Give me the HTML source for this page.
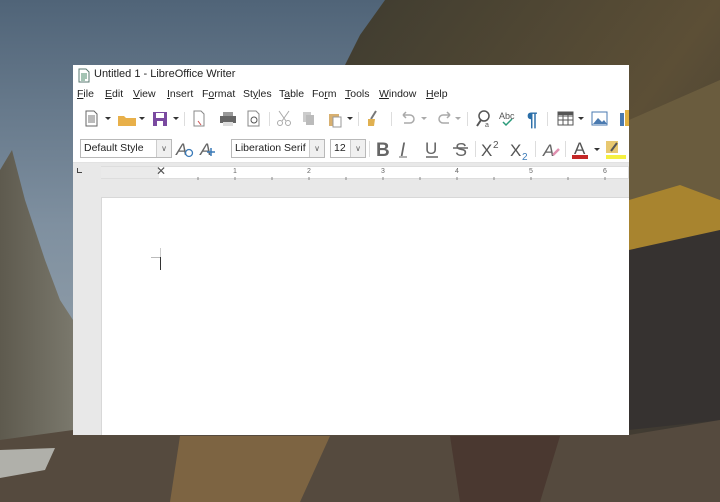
<!DOCTYPE html>
<html><head><meta charset="utf-8"><style>
*{margin:0;padding:0;box-sizing:border-box}
body{width:720px;height:502px;overflow:hidden;position:relative;font-family:"Liberation Sans",sans-serif;background:#6a7c8c}
#bg{position:absolute;left:0;top:0}
.win{position:absolute;left:73px;top:65px;width:556px;height:370px;background:#fff;overflow:hidden}
.t{position:absolute;font-size:11px;color:#222;white-space:nowrap}
.ic{position:absolute}
.box{position:absolute;border:1px solid #b9b9b9;background:#fff;height:19px;font-size:10.5px;line-height:17px;padding-left:3px;color:#222}
.dd{position:absolute;right:0;top:0;width:15px;height:17px;border-left:1px solid #ccc;background:#f0f0f0;font-size:8px;text-align:center;color:#666}
</style></head><body>
<svg id="bg" width="720" height="502">
<defs>
<linearGradient id="sky" x1="0" y1="0" x2="0" y2="1"><stop offset="0" stop-color="#506478"/><stop offset=".45" stop-color="#7f90a0"/><stop offset="1" stop-color="#a0aab0"/></linearGradient>
<linearGradient id="rr" x1="0" y1="0" x2="1" y2="1"><stop offset="0" stop-color="#3f3c30"/><stop offset=".5" stop-color="#5c4f36"/><stop offset="1" stop-color="#333130"/></linearGradient>
<linearGradient id="lc" x1="0" y1="0" x2="1" y2="0"><stop offset="0" stop-color="#5e5a4e"/><stop offset="1" stop-color="#7a786c"/></linearGradient>
</defs>
<rect width="720" height="502" fill="url(#sky)"/>
<polygon points="345,65 360,35 385,0 720,0 720,502 600,502 629,300 629,65" fill="url(#rr)"/>
<polygon points="629,120 720,80 720,230 660,240 629,230" fill="#6a5c3e"/>
<polygon points="629,200 680,185 720,200 720,240 680,260 629,250" fill="#a8842f"/>
<polygon points="629,250 720,230 720,420 629,430" fill="#363230"/>
<polygon points="0,170 12,150 25,200 45,260 60,300 73,320 73,440 0,450" fill="url(#lc)"/>
<polygon points="0,440 73,430 200,435 629,435 720,420 720,502 0,502" fill="#554a3e"/>
<polygon points="0,450 55,448 45,470 0,478" fill="#b0b0aa"/>
<polygon points="180,436 330,436 300,502 170,502" fill="#7d6442"/>
<polygon points="450,436 560,436 540,502 460,502" fill="#4a3830"/>
</svg>
<div class="win">
<svg class="ic" style="left:5px;top:3px" width="12" height="15"><path d="M1 1h7l3 3v10H1z" fill="#fff" stroke="#5a7a70"/><path d="M3 6h6M3 8h6M3 10h6M3 12h4" stroke="#4a8a6a"/></svg>
<div class="t" style="left:21px;top:3px;font-size:11px">Untitled 1 - LibreOffice Writer</div>
<div class="t" style="left:4px;top:23px;font-size:10.5px">
<span style="position:absolute;left:0"><u>F</u>ile</span><span style="position:absolute;left:28px"><u>E</u>dit</span><span style="position:absolute;left:56px"><u>V</u>iew</span><span style="position:absolute;left:90px"><u>I</u>nsert</span><span style="position:absolute;left:125px">F<u>o</u>rmat</span><span style="position:absolute;left:166px">St<u>y</u>les</span><span style="position:absolute;left:202px">T<u>a</u>ble</span><span style="position:absolute;left:235px">Fo<u>r</u>m</span><span style="position:absolute;left:268px"><u>T</u>ools</span><span style="position:absolute;left:302px"><u>W</u>indow</span><span style="position:absolute;left:349px"><u>H</u>elp</span></div>
<svg class="ic" style="left:0;top:42px" width="556" height="24" font-family="Liberation Sans">
<path d="M13 4h8l3 3v12H13z" fill="#fff" stroke="#666"/><path d="M15 9h7M15 11h7M15 13h7M15 15h7" stroke="#777"/>
<path d="M32 10l3 3 3-3z" fill="#333"/>
<path d="M45 9h6l2 2h10v8H45z" fill="#e8b04a"/>
<path d="M66 10l3 3 3-3z" fill="#333"/>
<rect x="80" y="5" width="14" height="14" fill="#7a4aa0"/><rect x="83" y="6" width="8" height="5" fill="#fff"/><rect x="84" y="14" width="6" height="5" fill="#fff"/>
<path d="M100 10l3 3 3-3z" fill="#333"/>
<rect x="111" y="5" width="1" height="14" fill="#ddd"/>
<path d="M121 4h7l3 3v12h-10z" fill="#fff" stroke="#888"/><path d="M125 14l3 4" stroke="#d05050"/>
<rect x="147" y="9" width="16" height="7" fill="#666"/><rect x="150" y="5" width="10" height="4" fill="#999"/><rect x="150" y="15" width="10" height="4" fill="#ddd"/>
<path d="M175 4h8l3 3v12h-11z" fill="#fff" stroke="#888"/><circle cx="181" cy="13" r="3" fill="none" stroke="#555"/>
<rect x="196" y="5" width="1" height="14" fill="#ddd"/>
<path d="M206 4l7 10M216 4l-7 10" stroke="#aaa"/><circle cx="207" cy="16" r="2.5" fill="none" stroke="#aaa"/><circle cx="215" cy="16" r="2.5" fill="none" stroke="#aaa"/>
<rect x="230" y="5" width="8" height="10" fill="#ccc"/><rect x="233" y="8" width="8" height="10" fill="#bbb"/>
<rect x="256" y="7" width="10" height="12" fill="#d8b070"/><rect x="260" y="10" width="8" height="10" fill="#fff" stroke="#999"/>
<path d="M274 10l3 3 3-3z" fill="#333"/>
<rect x="285" y="5" width="1" height="14" fill="#ddd"/>
<path d="M303 4l-5 8" stroke="#777" stroke-width="2"/><path d="M295 12h7l-1 7h-6z" fill="#e0b050"/>
<rect x="318" y="5" width="1" height="14" fill="#ddd"/>
<path d="M330 8h7a4 4 0 0 1 0 8h-6M330 8l3-3M330 8l3 3" fill="none" stroke="#aaa" stroke-width="1.5"/>
<path d="M348 10l3 3 3-3z" fill="#aaa"/>
<path d="M377 8h-7a4 4 0 0 0 0 8h6M377 8l-3-3M377 8l-3 3" fill="none" stroke="#aaa" stroke-width="1.5"/>
<path d="M382 10l3 3 3-3z" fill="#aaa"/>
<rect x="394" y="5" width="1" height="14" fill="#ddd"/>
<circle cx="411" cy="9" r="5" fill="none" stroke="#555" stroke-width="1.5"/><path d="M408 13l-4 6" stroke="#555" stroke-width="2"/><text x="412" y="20" font-size="7" fill="#555">a</text>
<text x="426" y="12" font-size="9" fill="#555">Abc</text><path d="M430 15l3 3 6-6" stroke="#2a9a7a" stroke-width="1.5" fill="none"/>
<text x="454" y="19" font-size="19" font-weight="bold" fill="#2a6ea8">¶</text>
<rect x="474" y="5" width="1" height="14" fill="#ddd"/>
<rect x="485" y="5" width="15" height="13" fill="#fff" stroke="#555"/><path d="M485 9h15M485 13h15M490 5v13M495 5v13" stroke="#555"/><rect x="485" y="5" width="15" height="3" fill="#555"/>
<path d="M505 10l3 3 3-3z" fill="#333"/>
<rect x="519" y="5" width="15" height="13" fill="#fff" stroke="#4a7ab0"/><path d="M520 17l5-6 4 4 2-2 3 4z" fill="#4a7ab0"/>
<rect x="547" y="6" width="4" height="13" fill="#4a7ab0"/><rect x="552" y="3" width="4" height="16" fill="#e0b040"/>
</svg>
<div class="box" style="left:7px;top:74px;width:92px">Default Style<div class="dd">&#8744;</div></div>
<svg class="ic" style="left:100px;top:73px" width="60" height="22"><text x="3" y="17" font-size="17" font-style="italic" fill="#666" font-family="Liberation Sans">A</text><circle cx="16" cy="15" r="3.5" fill="none" stroke="#3a7ab8" stroke-width="1.3"/><text x="27" y="17" font-size="17" font-style="italic" fill="#666" font-family="Liberation Sans">A</text><path d="M38 10v8M34 14h8" stroke="#3a7ab8" stroke-width="1.5"/></svg>
<div class="box" style="left:158px;top:74px;width:94px">Liberation Serif<div class="dd">&#8744;</div></div>
<div class="box" style="left:257px;top:74px;width:36px">12<div class="dd">&#8744;</div></div>
<svg class="ic" style="left:296px;top:72px" width="260" height="24" font-family="Liberation Sans">
<rect x="0" y="4" width="1" height="16" fill="#ddd"/>
<text x="7" y="19" font-size="19" font-weight="bold" fill="#666">B</text>
<text x="31" y="19" font-size="19" font-style="italic" fill="#666">I</text><path d="M30 20h8" stroke="#666"/>
<text x="56" y="17" font-size="17" fill="#666">U</text><path d="M57 20h12" stroke="#666" stroke-width="1.5"/>
<text x="86" y="19" font-size="18" fill="#666">S</text><path d="M84 11h15" stroke="#666" stroke-width="1.5"/>
<rect x="106" y="4" width="1" height="16" fill="#ddd"/>
<text x="112" y="19" font-size="17" fill="#555">X</text><text x="124" y="11" font-size="10" fill="#555">2</text>
<text x="141" y="19" font-size="17" fill="#555">X</text><text x="153" y="23" font-size="10" fill="#3a7ab8">2</text>
<rect x="166" y="4" width="1" height="16" fill="#ddd"/>
<text x="174" y="19" font-size="17" font-style="italic" fill="#666">A</text><path d="M184 18l6-6" stroke="#e090b0" stroke-width="2.5"/>
<rect x="196" y="4" width="1" height="16" fill="#ddd"/>
<text x="205" y="17" font-size="17" fill="#555">A</text><rect x="203" y="18" width="16" height="4" fill="#c42828"/>
<path d="M225 11l3 3 3-3z" fill="#333"/>
<rect x="237" y="4" width="12" height="12" fill="#e8c870"/><path d="M248 6l-6 8" stroke="#555" stroke-width="2"/><rect x="237" y="18" width="20" height="4" fill="#f5f040"/>
</svg>
<div style="position:absolute;left:0;top:97px;width:556px;height:1px;background:#e2e2e2"></div>
<div style="position:absolute;left:0;top:98px;width:556px;height:272px;background:#e8e8e8"></div>
<div style="position:absolute;left:4px;top:103px;width:5px;height:5px;border-left:1px solid #444;border-bottom:1px solid #444"></div>
<div style="position:absolute;left:28px;top:101px;width:528px;height:13px;background:#fff;border:1px solid #ddd"></div>
<div style="position:absolute;left:28px;top:102px;width:58px;height:11px;background:#eaeaea"></div>
<div class="t" style="left:83px;top:99px;font-size:12px;color:#555">✕</div>
<svg class="ic" style="left:28px;top:100px" width="528" height="18" font-family="Liberation Sans"><g fill="#666" font-size="7">
<text x="132" y="8">1</text><text x="206" y="8">2</text><text x="280" y="8">3</text><text x="354" y="8">4</text><text x="428" y="8">5</text><text x="502" y="8">6</text></g>
<g stroke="#888"><path d="M97 12v3M134 12v3M171 12v3M208 12v3M245 12v3M282 12v3M319 12v3M356 12v3M393 12v3M430 12v3M467 12v3M504 12v3"/></g></svg>
<div style="position:absolute;left:28px;top:132px;width:528px;height:240px;background:#fff;border-top:1px solid #d8d8d8;border-left:1px solid #d8d8d8"></div>
<div style="position:absolute;left:78px;top:192px;width:10px;height:1px;background:#bbb"></div>
<div style="position:absolute;left:87px;top:183px;width:1px;height:10px;background:#ccc"></div>
<div style="position:absolute;left:87px;top:192px;width:1px;height:13px;background:#333"></div>
</div>
</body></html>
